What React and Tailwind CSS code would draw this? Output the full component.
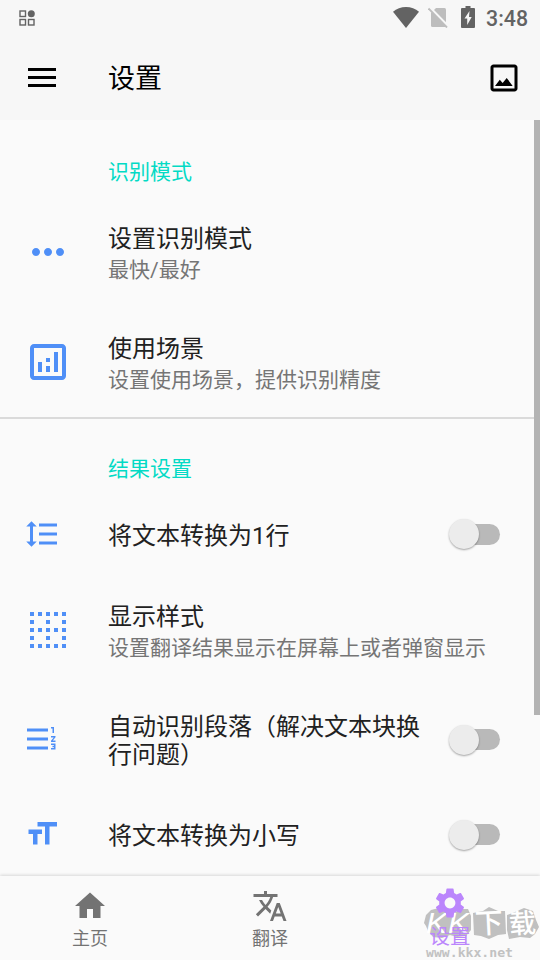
import React from "react";

const Svg = ({ className, children }) => (
  <svg viewBox="0 0 24 24" fill="currentColor" className={className}>
    {children}
  </svg>
);

const icons = {
  dots: (
    <path d="M6 10c-1.1 0-2 .9-2 2s.9 2 2 2 2-.9 2-2-.9-2-2-2zm12 0c-1.1 0-2 .9-2 2s.9 2 2 2 2-.9 2-2-.9-2-2-2zm-6 0c-1.1 0-2 .9-2 2s.9 2 2 2 2-.9 2-2-.9-2-2-2z" />
  ),
  analytics: (
    <path d="M19 3H5c-1.1 0-2 .9-2 2v14c0 1.1.9 2 2 2h14c1.1 0 2-.9 2-2V5c0-1.1-.9-2-2-2zm0 16H5V5h14v14zM7 12h2v5H7zM15 7h2v10h-2zM11 14h2v3h-2zM11 10h2v2h-2z" />
  ),
  lineSpacing: (
    <path d="M6 7h2.5L5 3.5 1.5 7H4v10H1.5L5 20.5 8.5 17H6V7zm4-2v2h12V5H10zm0 14h12v-2H10v2zm0-6h12v-2H10v2z" />
  ),
  grid: (
    <path d="M7 5h2V3H7v2zm0 8h2v-2H7v2zm0 8h2v-2H7v2zm4-4h2v-2h-2v2zm0 4h2v-2h-2v2zm-8 0h2v-2H3v2zm0-4h2v-2H3v2zm0-4h2v-2H3v2zm0-4h2V7H3v2zm0-4h2V3H3v2zm8 8h2v-2h-2v2zm8 4h2v-2h-2v2zm0-4h2v-2h-2v2zm0 8h2v-2h-2v2zm0-12h2V7h-2v2zm-8 0h2V7h-2v2zm8-6v2h2V3h-2zm-8 2h2V3h-2v2zm4 16h2v-2h-2v2zm0-8h2v-2h-2v2zm0-8h2V3h-2v2z" />
  ),
  numbered: (
    <path d="M18 16h2v.5h-1v1h1v.5h-2v1h3v-4h-3v1zm1-8h1V4h-2v1h1v3zm-1 3h1.8L18 13.1v.9h3v-1h-1.800L21 10.900V10h-3v1zM2 5h14v2H2zm0 12h14v2H2zm0-6h14v2H2z" />
  ),
  textSize: <path d="M9 4v3h5v12h3V7h5V4H9zm-6 8h3v7h3v-7h3V9H3v3z" />,
  home: <path d="M10 20v-6h4v6h5v-8h3L12 3 2 12h3v8z" />,
  translate: (
    <path d="M12.87 15.07l-2.54-2.51.03-.03c1.74-1.94 2.98-4.17 3.71-6.53H17V4h-7V2H8v2H1v1.990h11.170C11.500 7.920 10.440 9.750 9 11.350 8.070 10.320 7.300 9.190 6.690 8h-2c.73 1.630 1.730 3.170 2.980 4.560l-5.090 5.020L4 19l5-5 3.110 3.110.76-2.040zM18.500 10h-2L12 22h2l1.120-3h4.750L21 22h2l-4.500-12zm-2.620 7l1.620-4.330L19.120 17h-3.240z" />
  ),
  settings: (
    <path d="M19.140 12.940c.04-.3.06-.61.06-.94 0-.32-.02-.64-.07-.94l2.030-1.580c.18-.14.23-.41.12-.61l-1.920-3.320c-.12-.22-.37-.29-.59-.22l-2.390.96c-.5-.38-1.030-.7-1.620-.94l-.36-2.540c-.04-.24-.24-.41-.48-.41h-3.840c-.24 0-.43.17-.47.41l-.36 2.540c-.59.24-1.130.57-1.620.94l-2.390-.96c-.22-.08-.47 0-.59.22L2.740 8.870c-.12.21-.08.47.12.61l2.030 1.580c-.05.3-.09.63-.09.94s.02.64.07.94l-2.030 1.580c-.18.14-.23.41-.12.61l1.920 3.320c.12.22.37.29.59.22l2.390-.96c.5.38 1.030.7 1.620.94l.36 2.540c.05.24.24.41.48.41h3.840c.24 0 .44-.17.47-.41l.36-2.540c.59-.24 1.130-.56 1.620-.94l2.390.96c.22.08.47 0 .59-.22l1.920-3.320c.12-.22.07-.47-.12-.61l-2.010-1.580zM12 15.600c-1.980 0-3.600-1.620-3.600-3.600s1.620-3.600 3.600-3.600 3.600 1.620 3.600 3.600-1.620 3.600-3.600 3.600z" />
  ),
};

const StatusBar = () => (
  <div className="flex h-9 items-center justify-between pl-[19px] pr-3 text-[#636363]">
    <svg viewBox="0 0 16 16" className="size-4" fill="none" stroke="currentColor" strokeWidth="1.4">
      <rect x="1" y="1" width="5.500" height="5.500" />
      <rect x="1" y="9.500" width="5.500" height="5.500" />
      <rect x="9.500" y="9.500" width="5.500" height="5.500" />
      <circle cx="12.300" cy="3.700" r="3.500" fill="currentColor" stroke="none" />
    </svg>
    <div className="flex items-center">
      <svg viewBox="0 0 26 21" className="mb-0.5 h-[21px] w-[26px]" fill="currentColor">
        <path d="M13 21L0 4.700C3.500 1.700 8 0 13 0s9.500 1.700 13 4.700z" />
      </svg>
      <svg viewBox="0 0 20 21" className="mb-0.5 ml-[9px] h-[21px] w-5">
        <path d="M8 1h8.500a1.500 1.500 0 0 1 1.500 1.500V20H4.500a1.500 1.500 0 0 1-1.500-1.500V6z" fill="#bdbdbd" />
        <path d="M1.500 .5L20 19.500" stroke="#f7f7f7" strokeWidth="3" />
        <path d="M.5 1.500L19 20.500" stroke="#bdbdbd" strokeWidth="1.800" />
      </svg>
      <svg viewBox="0 0 14 22" className="mb-0.5 ml-[13px] h-[22px] w-3.5">
        <path d="M4.500 0h5v2H13a1 1 0 0 1 1 1v18a1 1 0 0 1-1 1H1a1 1 0 0 1-1-1V3a1 1 0 0 1 1-1h3.500z" fill="currentColor" />
        <path d="M8.500 5L3.500 12.500h2.700v6.500L10.700 11H8z" fill="#f7f7f7" />
      </svg>
      <span className="ml-[11px] mt-0.5 font-['Roboto'] text-[21.3px] leading-6 font-medium">3:48</span>
    </div>
  </div>
);

const Toolbar = () => (
  <div className="flex h-[84px] items-center pl-7 pr-[18px] text-black">
    <div className="mb-0.5 flex w-7 flex-col gap-[5px]">
      <span className="h-[3px] bg-black" />
      <span className="h-[3px] bg-black" />
      <span className="h-[3px] bg-black" />
    </div>
    <h1 className="ml-[52px] flex-1 pt-0.5 text-[27px] leading-9">设置</h1>
    <Svg className="size-9">
      <path d="M19 5v14H5V5h14m0-2H5c-1.100 0-2 .9-2 2v14c0 1.100.9 2 2 2h14c1.100 0 2-.9 2-2V5c0-1.100-.9-2-2-2z" />
      <path d="M6 17.300l3.200-4.100 1.900 2.100 2.700-3.300 4 5.300z" />
    </Svg>
  </div>
);

const Switch = () => (
  <div className="mr-10 mb-px flex h-[30px] w-[51px] shrink-0 items-center">
    <div className="z-10 size-[30px] shrink-0 rounded-full bg-[#ececec] shadow-[0_1px_2px_rgba(0,0,0,0.35)]" />
    <div className="-ml-[18px] h-[21px] flex-1 rounded-full bg-[#b9b9b9]" />
  </div>
);

const Row = ({ icon, small, title, desc, toggle, height }) => (
  <div className={`flex shrink-0 items-center pl-6 ${height}`}>
    <div className="w-[84px] shrink-0 text-[#4f8ff7]">
      <Svg className={small ? "mb-0.5 size-9" : "size-12"}>{icon}</Svg>
    </div>
    <div className={`flex-1 pr-6 ${desc ? "pt-1.5" : "pt-0.5"}`}>
      <p className="text-[24px] leading-7 text-[#212121]">{title}</p>
      {desc && <p className="mt-0.5 text-[21px] leading-[30px] whitespace-nowrap text-[#757575]">{desc}</p>}
    </div>
    {toggle && <Switch />}
  </div>
);

const tabs = [
  { icon: icons.home, label: "主页" },
  { icon: icons.translate, label: "翻译" },
  { icon: icons.settings, label: "设置", active: true },
];

const Watermark = () => (
  <svg viewBox="0 0 117 54" className="pointer-events-none absolute right-0 bottom-0 h-[54px] w-[117px]">
    <g fill="#858585" fillOpacity="0.5">
      <path d="M1 17L3 9l5-5 8-2 9 3 5 3 7-5 8 0 3 7 0 14-5 6-9 1-7-2-8 3-9-1-5-6-2-5z" />
      <path d="M50 7l10-2 6-4 9 4 7 0 1 23-8 1-9 4-8-3-7-1z" />
      <path d="M84 9l8-3 9-4 9 3 3 9 3 7-4 7-5 4-10-1-11 2-2-9z" />
    </g>
    <g fill="#fff" fontFamily="'Liberation Sans', 'Noto Sans CJK SC', sans-serif">
      <text x="3" y="27" fontSize="29" fontStyle="italic" textLength="21" lengthAdjust="spacingAndGlyphs">K</text>
      <text x="25" y="27" fontSize="29" fontStyle="italic" textLength="21" lengthAdjust="spacingAndGlyphs">K</text>
      <text x="52" y="27" fontSize="28" fontWeight="500" transform="rotate(-3 66 18)">下</text>
      <text x="86" y="27" fontSize="27" fontWeight="500" transform="rotate(-3 100 18)">载</text>
    </g>
    <text
      x="3"
      y="51"
      fill="#c2c2c2"
      fontSize="12"
      fontWeight="700"
      fontFamily="'DejaVu Sans Mono', monospace"
      textLength="87"
      lengthAdjust="spacingAndGlyphs"
    >
      www.kkx.net
    </text>
  </svg>
);

const App = () => {
  return (
    <div className="flex h-[960px] w-[540px] flex-col overflow-hidden bg-[#fafafa] font-['Roboto','Noto_Sans_CJK_SC',sans-serif]">
      <header className="shrink-0 bg-[#f7f7f7]">
        <StatusBar />
        <Toolbar />
      </header>

      <main className="flex min-h-0 flex-1 overflow-hidden">
        <div className="flex w-[540px] shrink-0 flex-col">
          <h2 className="h-[77px] shrink-0 pt-9 pl-[108px] text-[21px] leading-8 text-[#03dac5]">识别模式</h2>
          <Row icon={icons.dots} title="设置识别模式" desc="最快/最好" height="h-[110px]" />
          <Row icon={icons.analytics} title="使用场景" desc="设置使用场景，提供识别精度" height="h-[110px]" />
          <div className="h-0.5 shrink-0 bg-[#dadada]" />
          <h2 className="h-[75px] shrink-0 pt-[34px] pl-[108px] text-[21px] leading-8 text-[#03dac5]">结果设置</h2>
          <Row icon={icons.lineSpacing} small title="将文本转换为1行" toggle height="h-[81px]" />
          <Row icon={icons.grid} title="显示样式" desc="设置翻译结果显示在屏幕上或者弹窗显示" height="h-[110px]" />
          <Row icon={icons.numbered} small title="自动识别段落（解决文本块换行问题）" toggle height="h-[110px]" />
          <Row icon={icons.textSize} small title="将文本转换为小写" toggle height="h-[80px]" />
        </div>
        <div className="-ml-1.5 h-[595px] w-1.5 shrink-0 bg-[#b3b3b3]" />
      </main>

      <nav className="relative z-10 flex h-[84px] shrink-0 bg-[#fafafa] shadow-[0_-1px_3px_rgba(0,0,0,0.14)]">
        <Watermark />
        {tabs.map(({ icon, label, active }) => (
          <div
            key={label}
            className={`z-10 flex flex-1 flex-col items-center ${active ? "pt-[9px] text-[#bb86fc]" : "pt-3 text-[#737373]"}`}>
            <Svg className="size-9">{icon}</Svg>
            <span className={active ? "mt-0.5 text-[20.500px] leading-7" : "mt-[3px] text-[18px] leading-6"}>{label}</span>
          </div>
        ))}
      </nav>
    </div>
  );
};

export default App;
